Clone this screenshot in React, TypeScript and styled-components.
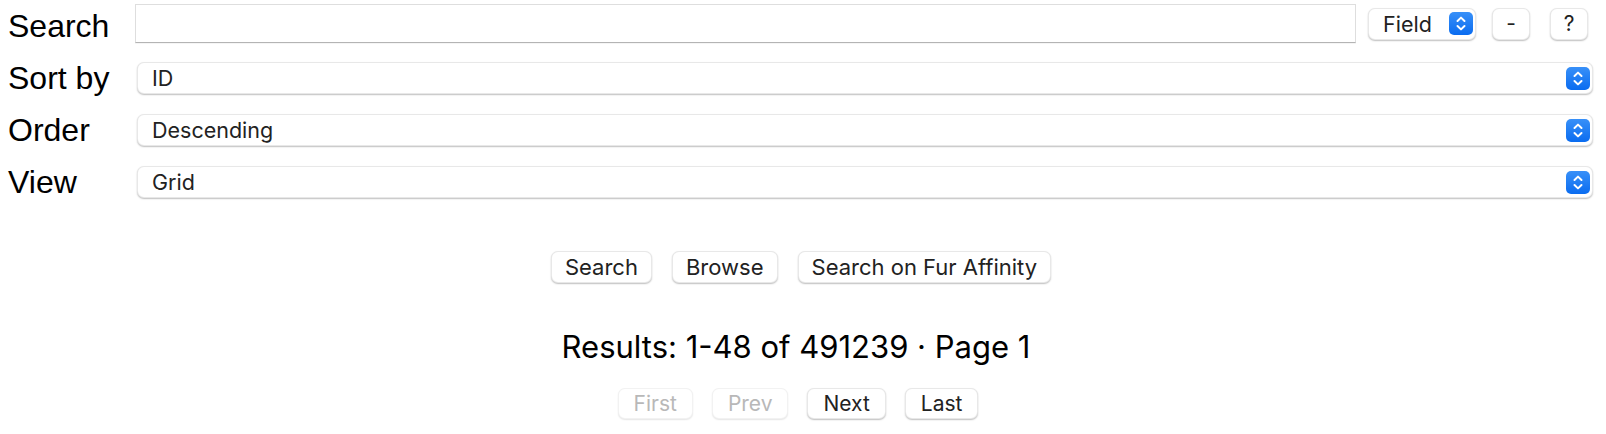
import React from 'react'
import styled, { createGlobalStyle } from 'styled-components'

type SelectRow = {
  label: string
  value: string
  options: string[]
}

const selectRows: SelectRow[] = [
  { label: 'Sort by', value: 'ID', options: ['ID', 'Title', 'Artist', 'Date'] },
  { label: 'Order', value: 'Descending', options: ['Descending', 'Ascending'] },
  { label: 'View', value: 'Grid', options: ['Grid', 'List'] },
]

const actions = ['Search', 'Browse', 'Search on Fur Affinity']

const pages = [
  { label: 'First', disabled: true },
  { label: 'Prev', disabled: true },
  { label: 'Next', disabled: false },
  { label: 'Last', disabled: false },
]

const Stepper = () => (
  <StepperIcon width="24" height="23" viewBox="0 0 24 23">
    <defs>
      <linearGradient id="stepper-blue" x1="0" y1="0" x2="0" y2="1">
        <stop offset="0" stopColor="#3890f8" />
        <stop offset="1" stopColor="#0a6cf0" />
      </linearGradient>
    </defs>
    <rect width="24" height="23" rx="5" fill="url(#stepper-blue)" />
    <path
      d="M8.5 9 L12 5.6 L15.5 9 M8.5 14 L12 17.4 L15.5 14"
      fill="none"
      stroke="#fff"
      strokeWidth="2"
      strokeLinecap="round"
      strokeLinejoin="round"
    />
  </StepperIcon>
)

type SelectProps = {
  value: string
  options: string[]
  width?: number
}

const Select = ({ value, options, width }: SelectProps) => (
  <SelectBox $width={width}>
    <NativeSelect defaultValue={value}>
      {options.map((o) => (
        <option key={o}>{o}</option>
      ))}
    </NativeSelect>
    <Stepper />
  </SelectBox>
)

const App = () => {
  return (
    <>
      <GlobalStyle />
      <Page>
        <Form>
          <Label>Search</Label>
          <SearchCell>
            <SearchInput type="text" />
            <Select value="Field" options={['Field', 'Title', 'Artist', 'Tags']} width={108} />
            <SquareButton $gap={16}>-</SquareButton>
            <SquareButton $gap={20}>?</SquareButton>
          </SearchCell>
          {selectRows.map((row) => (
            <React.Fragment key={row.label}>
              <Label>{row.label}</Label>
              <SelectCell>
                <Select value={row.value} options={row.options} />
              </SelectCell>
            </React.Fragment>
          ))}
        </Form>

        <Center>
          <ButtonRow $gap={20}>
            {actions.map((a) => (
              <Button key={a}>{a}</Button>
            ))}
          </ButtonRow>
          <Results>Results: 1-48 of 491239 · Page 1</Results>
          <ButtonRow $gap={19} $offset={6}>
            {pages.map((p) => (
              <Button key={p.label} $pager disabled={p.disabled}>
                {p.label}
              </Button>
            ))}
          </ButtonRow>
        </Center>
      </Page>
    </>
  )
}

export default App

const GlobalStyle = createGlobalStyle`
  html, body {
    margin: 0;
    background: #ffffff;
  }
  body {
    font-family: 'Liberation Sans', Arial, sans-serif;
    color: #000;
  }
`

const Page = styled.div`
  width: 1606px;
  min-height: 434px;
  box-sizing: border-box;
`

const Form = styled.div`
  display: grid;
  grid-template-columns: 127px 1fr;
  grid-auto-rows: 52px;
  align-items: center;
  padding: 0 11px 0 8px;
`

const Label = styled.div`
  font-family: 'Liberation Sans', Arial, sans-serif;
  font-size: 32px;
  color: #000;
  white-space: nowrap;
`

const SearchCell = styled.div`
  align-self: start;
  display: flex;
  align-items: center;
  gap: 12px;
  padding: 4px 7px 0 0;
`

const SelectCell = styled.div`
  display: flex;
  padding: 0 2px;
`

const SearchInput = styled.input`
  flex: 1;
  min-width: 0;
  height: 39px;
  box-sizing: border-box;
  margin: 0;
  border: 1px solid #dedede;
  border-bottom-color: #b4b4b4;
  border-radius: 0;
  box-shadow: 0 1px 0 rgba(0, 0, 0, 0.04);
  background: #fff;
  font-family: Inter, sans-serif;
  font-size: 21px;
  padding: 0 8px;
  outline: none;
`

const SelectBox = styled.label<{ $width?: number }>`
  display: flex;
  align-items: center;
  flex: ${(p) => (p.$width ? `0 0 ${p.$width}px` : '1')};
  height: 32px;
  box-sizing: border-box;
  padding: 0 2px 0 14px;
  background: #fff;
  border: 1px solid rgba(0, 0, 0, 0.09);
  border-radius: 7px;
  box-shadow: 0 1px 1.5px rgba(0, 0, 0, 0.25);
`

const NativeSelect = styled.select`
  flex: 1;
  min-width: 0;
  appearance: none;
  -webkit-appearance: none;
  border: none;
  background: transparent;
  padding: 0;
  margin: 0;
  font-family: Inter, sans-serif;
  font-size: 21.5px;
  color: #222;
  outline: none;
`

const StepperIcon = styled.svg`
  flex: none;
  display: block;
`

const SquareButton = styled.button<{ $gap: number }>`
  width: 38px;
  height: 32px;
  margin-left: ${(p) => p.$gap - 12}px;
  padding: 0;
  background: #fff;
  border: 1px solid rgba(0, 0, 0, 0.09);
  border-radius: 7px;
  box-shadow: 0 1px 1.5px rgba(0, 0, 0, 0.25);
  font-family: Inter, sans-serif;
  font-size: 21px;
  color: #222;
`

const Center = styled.div`
  display: flex;
  flex-direction: column;
  align-items: center;
  padding: 43px 4px 0 0;
`

const ButtonRow = styled.div<{ $gap: number; $offset?: number }>`
  display: flex;
  gap: ${(p) => p.$gap}px;
  margin-right: ${(p) => p.$offset ?? 0}px;
`

const Button = styled.button<{ $pager?: boolean }>`
  height: ${(p) => (p.$pager ? 31 : 32)}px;
  padding: 0 ${(p) => (p.$pager ? 15 : 13)}px;
  background: #fff;
  border: 1px solid rgba(0, 0, 0, 0.09);
  border-radius: 7px;
  box-shadow: 0 1px 1.5px rgba(0, 0, 0, 0.25);
  font-family: Inter, sans-serif;
  font-size: ${(p) => (p.$pager ? 21 : 22)}px;
  color: #222;
  white-space: nowrap;

  &:disabled {
    color: #b8b8b8;
    border-color: rgba(0, 0, 0, 0.05);
    box-shadow: 0 1px 1.5px rgba(0, 0, 0, 0.1);
  }
`

const Results = styled.div`
  margin: 47px 10px 24px 0;
  font-family: Inter, sans-serif;
  font-size: 31px;
  line-height: 34px;
  color: #000;
`
